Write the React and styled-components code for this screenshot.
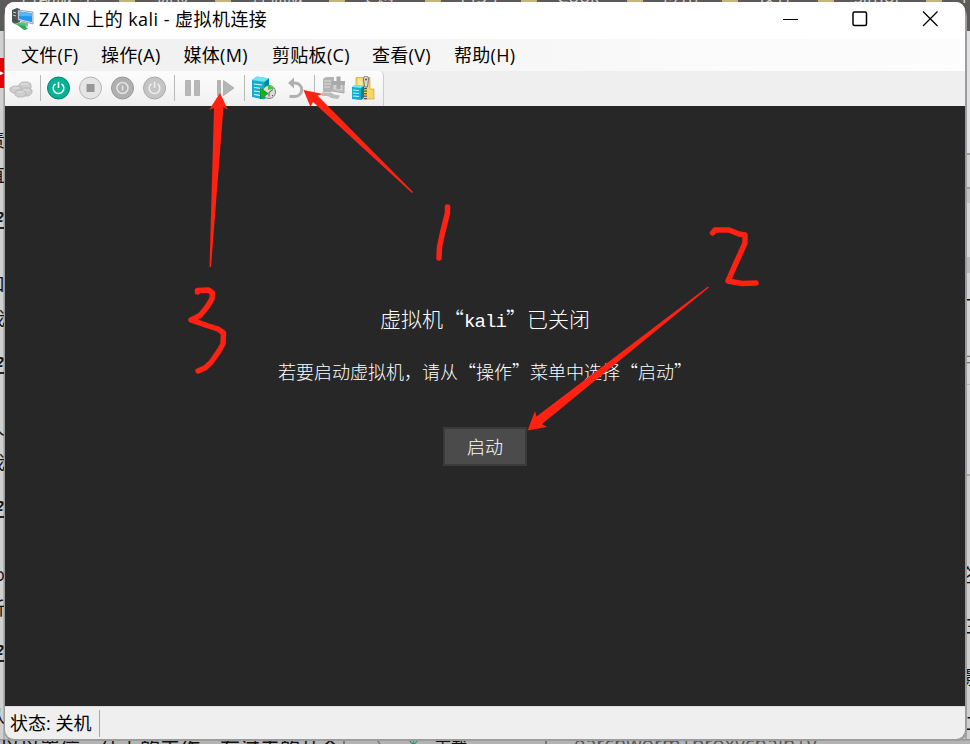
import React from 'react';
import styled, { createGlobalStyle, css } from 'styled-components';

const ui = '"Open Sans", "Noto Sans CJK SC", sans-serif';
const RED = '#ff2112';

const Global = createGlobalStyle`
  * { box-sizing: border-box; }
  body { margin: 0; overflow: hidden; }
`;

const Desktop = styled.div`
  position: relative;
  width: 970px;
  height: 744px;
  overflow: hidden;
  background: #c9c9c9;
  font-family: ${ui};
`;

/* ---------- pages behind the window ---------- */
const Backdrop = styled.div`
  display: grid;
  grid-template: 31px 1fr 5px / 5px 1fr 5px;
  width: 100%;
  height: 100%;
`;
const Bookmarks = styled.div`
  grid-column: 1 / -1;
  background: #5c5a5a;
  display: flex;
  overflow: hidden;
  color: #d2d2d2;
`;
const Folder = styled.i`
  flex: none;
  width: 16px;
  height: 3px;
  background: #c5b57c;
`;
const Bookmark = styled.span`
  flex: none;
  width: ${p => p.$w}px;
  padding-left: 20px;
  font-size: 18px;
  line-height: 16px;
  height: 16px;
  margin-top: -12px;
  white-space: nowrap;
  overflow: hidden;
`;
const Edge = styled.div`
  overflow: hidden;
  display: flex;
  flex-direction: column;
  background: linear-gradient(90deg, #d0d0d0 0 3px, #b2b2b2 3px);
`;
const RightEdge = styled(Edge)`
  grid-column: 3;
  background:
    linear-gradient(90deg, #a6a6a6 0 2px, transparent 2px),
    linear-gradient(#e2e2e4 0 122px, #a0a0a0 122px 124px, #d4d4d6 124px 156px, #a0a0a0 156px 158px,
      #c4c4c8 158px 172px, #d8d8da 172px 226px, #bcbcc0 226px 242px, #d6d6d8 242px 353px,
      #b8b8ba 353px 354px, #d6d6d8 354px 443px, #aaa 443px 445px, #cfcfd0 445px);
`;
const Scrap = styled.span`
  flex: none;
  height: 18px;
  width: 19px;
  margin: ${p => p.$gap}px 0 0 ${p => p.$shift || 0}px;
  font-size: 18px;
  line-height: 18px;
  color: ${p => p.$c || '#111'};
  ${p => p.$rule && css`
    border-bottom: 2px solid #222;
    font-style: italic;
    font-weight: 700;
    font-size: 14px;
    line-height: 12px;
  `}
`;
const RedTag = styled.b`
  flex: none;
  height: 30px;
  margin-top: 27px;
  background: #e60000;
  color: #fff;
  font-size: 7px;
  line-height: 30px;
`;
const Under = styled.div`
  grid-column: 1 / -1;
  grid-row: 3;
  overflow: hidden;
  display: flex;
  background: linear-gradient(#969696 0 1px, #b4b4b4 2px);
  white-space: nowrap;
`;
const UnderText = styled.span`
  flex: none;
  height: 20px;
  width: ${p => p.$w}px;
  padding-left: ${p => p.$pad || 0}px;
  color: ${p => p.$c || '#111'};
  font-size: ${p => p.$size || 20}px;
  line-height: ${p => p.$lh || 20}px;
  ${p => p.$line && css`border-right: 2px solid #777;`}
`;

/* ---------- window ---------- */
const Window = styled.main`
  position: absolute;
  left: 5px;
  top: 2px;
  width: 960px;
  height: 737px;
  border-radius: 9px;
  overflow: hidden;
  display: flex;
  flex-direction: column;
  background: #efefef;
  color: #000;
`;
const Shade = styled.div`
  position: absolute;
  left: 4px;
  top: 6px;
  width: 963px;
  height: 735px;
  border-radius: 10px;
  background: #9c9c9c;
`;
const TitleBar = styled.header`
  flex: none;
  height: 37px;
  display: flex;
  align-items: center;
  background: #fff;
  padding: 0 0 3px 6px;
`;
const Title = styled.h1`
  margin: 0 auto 0 4px;
  font-size: 18px;
  line-height: 30px;
  font-weight: 400;
  white-space: pre;
  letter-spacing: 0.45px;
`;
const Caption = styled.button`
  width: 70px;
  height: 36px;
  padding: 0;
  border: 0;
  background: none;
  display: grid;
  place-items: center;
`;
const MenuBar = styled.nav`
  flex: none;
  height: 32px;
  display: flex;
  align-items: center;
  background: linear-gradient(90deg, #f0f0f0, #f2f2f2 30%, #fbfbfb 75%, #fcfcfc);
  padding-left: 16px;
`;
const MenuItem = styled.span`
  width: ${p => p.$w}px;
  font-size: 18px;
  line-height: 30px;
  letter-spacing: 0.3px;
  white-space: nowrap;
`;
const ToolRow = styled.div`
  flex: none;
  height: 35px;
  display: flex;
`;
const Tools = styled.div`
  width: 379px;
  display: flex;
  align-items: center;
  background: linear-gradient(#fcfcfc, #f7f7f7 50%, #eeeeee);
  border-radius: 0 5px 0 0;
  border-right: 1px solid #ccc;
  padding-bottom: 1px;
`;
const Slot = styled.span`
  width: ${p => p.$w}px;
  height: 24px;
  display: grid;
  place-items: center;
`;
const Separator = styled.i`
  width: 1px;
  height: 26px;
  margin: 0 3px;
  background: #b9b9b9;
`;
const Screen = styled.section`
  flex: none;
  height: 600px;
  display: flex;
  flex-direction: column;
  align-items: center;
  background: #272727;
  color: #fff;
  font-family: "Noto Sans CJK SC", sans-serif;
  font-weight: 300;
`;
const Heading = styled.h2`
  margin: 196px 0 0;
  font-size: 21px;
  line-height: 32px;
  height: 32px;
  font-weight: 300;
  white-space: nowrap;
`;
const Mono = styled.span`
  font-family: "Liberation Mono", monospace;
  font-size: 19px;
  letter-spacing: -0.9px;
`;
const Hint = styled.p`
  margin: 22px 0 0;
  font-size: 18px;
  line-height: 30px;
  white-space: nowrap;
`;
const StartButton = styled.button`
  width: 84px;
  height: 39px;
  margin-top: 41px;
  padding: 0 0 2px;
  border: 2px solid #3a3a3a;
  background: #4b4b4b;
  color: #fff;
  font: 300 18px/30px "Noto Sans CJK SC", sans-serif;
`;
const StatusBar = styled.footer`
  height: 33px;
  display: flex;
  align-items: center;
  border-top: 1px solid #dcdcdc;
  padding-left: 5px;
`;
const Status = styled.span`
  width: 90px;
  height: 27px;
  border-right: 1px solid #a5a5a5;
  font-size: 18px;
  line-height: 27px;
  white-space: nowrap;
`;
const Marks = styled.svg`
  position: absolute;
  inset: 0;
  pointer-events: none;
`;

const Icon = ({ children, size = 24 }) => (
  <svg width={size} height={size} viewBox="0 0 24 24" fill="none">{children}</svg>
);

const Circle = ({ fill, edge, children }) => (
  <Icon><circle cx="11.5" cy="12" r="11" fill={fill} stroke={edge} />{children}</Icon>
);
const Power = ({ c }) => (
  <g stroke={c} strokeWidth="1.6"><path d="M8.500 7.800a5.300 5.300 0 1 0 6 0M11.500 5.800v6.200" /></g>
);

const AppIcon = () => (
  <Icon>
    <path d="M1 3l5-2 3 1v13l-5 2-3-2z" fill="#4c5357" />
    <path d="M2 5l3 1M2 8l3 1" stroke="#c6d0d3" />
    <path d="M7 3l15 2v12L7 13z" fill="#e1e7ea" stroke="#78848b" strokeWidth=".7" />
    <path d="M8 4.500l13 1.700v9L8 12z" fill="#2196f3" />
    <path d="M8 4.500l13 1.700v3L8 9z" fill="#55b4fa" />
    <path d="M12 15l5 1v4l-3-1z" fill="#a5adb0" />
    <path d="M3 17l8-2 4 2v3l-8-2z" fill="#48c77a" />
    <path d="M5 17l9 2 3 3-4 1z" fill="#31a45c" />
  </Icon>
);
const Keys = () => (
  <Icon>
    <g fill="#cdcdcd" stroke="#b2b2b2" strokeWidth=".8">
      <path d="M10 8.500l3-2.500h6l3 2v4l-3 2h-6l-3-2z" /><path d="M1 12l4-2h5l3 2v3l-3 2H4l-3-2z" />
      <path d="M12 14l2-2h6l3 2v3l-3 3h-5l-3-2z" /><path d="M6 16l3-2h5l3 2v3l-3 2H9l-3-2z" />
    </g>
    <path d="M12 8h7M4 12h6M14 14h6M9 16h5" stroke="#e3e3e3" />
  </Icon>
);
const Checkpoint = () => (
  <Icon>
    <path d="M0 4l5-3.500L17 2.500V19l-5 4.500L0 21z" fill="#12b0cc" />
    <path d="M0 4l5-3.500L17 2.500 12.500 6z" fill="#6ce6f3" /><path d="M12.500 6L17 2.500V19l-4.500 4z" fill="#078498" />
    <path d="M2 8l8 1M2 11.500l8 1M2 15l7 1M2 18.500l6 .8" stroke="#d6fbff" strokeWidth="1.200" />
    <circle cx="17" cy="16" r="6.500" fill="#dcdcdc" stroke="#7c7c7c" />
    <path d="M17 16.500l4-3M17 16.500v4M13 19l1-1M20 19l1 1" stroke="#555" />
    <path d="M16 8.500l6.500 4-6.500 1.500z" fill="#3ccb3c" /><path d="M8.500 12l7.500 5.500-7.500 5.500z" fill="#14b514" stroke="#087b12" strokeWidth=".6" />
  </Icon>
);
const Revert = () => (
  <Icon>
    <path d="M8 7h4a6.200 6.200 0 0 1 0 13.500H6.500" stroke="#b0b0b0" strokeWidth="3" />
    <path d="M5 7l6-5.500v11z" fill="#b0b0b0" />
  </Icon>
);
const Enhanced = () => (
  <Icon>
    <path d="M1 3l3-2h8v13l-3 2H1z" fill="#b4b4b4" /><path d="M2 5h7M2 8h7M2 11h6" stroke="#dcdcdc" />
    <path d="M10 7h12v10l-12-2z" fill="#c2c2c2" stroke="#a8a8a8" /><path d="M12 9h8v5l-8-1z" fill="#d4d4d4" />
    <path d="M14.500.5h4V5H23v4h-4.500v4h-4V9H10V5h4.500z" fill="#a9a9a9" />
    <path d="M0 16.500h9l3 2 6 1-2 3.500-7-1-3-2H0z" fill="#bbb" />
  </Icon>
);
const Archive = () => (
  <Icon>
    <path d="M4 1.500h14V13h4v10H4z" fill="#f7d565" stroke="#d2a431" strokeWidth=".7" />
    <path d="M6 3h4v19H6z" fill="#fde79b" />
    <path d="M13.500 7v17" stroke="#555" strokeWidth="3" strokeDasharray="1.300 1.200" />
    <path d="M11.500 3c0-4 5-4 5 0l-1 8h-3z" fill="#d7d7d7" stroke="#777" /><circle cx="14" cy="3.500" r="1" fill="#555" />
    <path d="M0 11l3-2 9 1v11l-3 3-9-1z" fill="#12afca" /><path d="M0 11l3-2 9 1-3 2z" fill="#78e8f4" />
    <path d="M9 12l3-2v11l-3 3z" fill="#087d93" /><path d="M1 14l6 .5M1 17l6 .5M1 20l6 .5" stroke="#b7f7ff" />
  </Icon>
);

const bookmarks = [['标签', 80], ['神仙版', 98], ['t 购', 80], ['( [3 )', 80], ['Cook', 90], ['应用', 79], ['仅存', 80], ['simor', 92], ['re', 30]];
const leftScraps = [[43, '责', -13], [17, '直', -13], [27, '2', -4, 1], [46, '口', -13], [16, '我', -13], [29, '2', -4, 1], [45, '人', -13], [16, '我', -13], [29, '2', -4, 1], [47, 'o', -6], [16, '听', -13], [27, '2', -4, 1], [45, '从', -13]];
const rightScraps = [[260, '一', 0], [43, '中', -8, '#777'], [196, '论', -9], [33, '三', 0], [33, '影', 0], [28, '二', 0]];
const menus = [['文件(F)', 80], ['操作(A)', 82.5], ['媒体(M)', 88.5], ['剪贴板(C)', 100], ['查看(V)', 82], ['帮助(H)', 80]];

export default function App() {
  return (
    <Desktop>
      <Global />
      <Backdrop>
        <Bookmarks>
          <Bookmark $w={119}>自动版 小</Bookmark>
          {bookmarks.map(([label, w], i) => (
            <React.Fragment key={i}><Folder /><Bookmark $w={w}>{label}</Bookmark></React.Fragment>
          ))}
        </Bookmarks>
        <Edge>
          <RedTag>▸</RedTag>
          {leftScraps.map(([gap, text, shift, rule], i) => <Scrap key={i} $gap={gap} $shift={shift} $rule={rule}>{text}</Scrap>)}
        </Edge>
        <RightEdge>
          {rightScraps.map(([gap, text, shift, c], i) => <Scrap key={i} $gap={gap} $shift={shift} $c={c}>{text}</Scrap>)}
        </RightEdge>
        <Under>
          <UnderText $w={345} $line>以以置信，什上的工作，在过去的几个</UnderText>
          <UnderText $w={60} $pad={30} $c="#777">〉</UnderText>
          <UnderText $w={30} $c="#159577" $lh={12}>✳</UnderText>
          <UnderText $w={112} $size={16} $lh={16} $line>下载</UnderText>
          <UnderText $w={300} $pad={27} $size={20} $lh={10} $c="#555">earchworm+proxychain+v</UnderText>
        </Under>
      </Backdrop>
      <Shade />
      <Window>
        <TitleBar>
          <AppIcon />
          <Title>ZAIN 上的 kali - 虚拟机连接</Title>
          <Caption><svg width="16" height="16"><path d="M1 8.500h15" stroke="#000" /></svg></Caption>
          <Caption><svg width="16" height="16"><rect x="1" y="1" width="13.500" height="13.500" rx="1.500" fill="none" stroke="#000" strokeWidth="1.500" /></svg></Caption>
          <Caption><svg width="16" height="16"><path d="M1 .5l14.500 14.500m0-14.500l-14.500 14.500" stroke="#000" strokeWidth="1.300" /></svg></Caption>
        </TitleBar>
        <MenuBar>{menus.map(([text, w]) => <MenuItem key={text} $w={w}>{text}</MenuItem>)}</MenuBar>
        <ToolRow>
          <Tools>
            <Slot $w={32}><Keys /></Slot>
            <Separator />
            <Slot $w={30}><Circle fill="#06b294" edge="#07806d"><Power c="#fff" /></Circle></Slot>
            <Slot $w={33}><Circle fill="#e5e5e5" edge="#b4b4b4"><path d="M7.500 8h8v8h-8z" fill="#979797" /></Circle></Slot>
            <Slot $w={32}><Circle fill="#b0b0b0" edge="#999"><circle cx="11.500" cy="12" r="5.500" stroke="#e4e4e4" strokeWidth="1.500" /><path d="M11.500 9.500v5" stroke="#e4e4e4" strokeWidth="1.600" /></Circle></Slot>
            <Slot $w={32}><Circle fill="#c5c5c5" edge="#aaa"><Power c="#eee" /></Circle></Slot>
            <Separator />
            <Slot $w={30}><Icon><path d="M4.500 4.500h5v15h-5zM13.500 4.500h5v15h-5z" fill="#b7b7b7" stroke="#aaa" strokeWidth=".8" /></Icon></Slot>
            <Slot $w={33}><Icon><path d="M4.500 4.500h3v15h-3zM10.500 4.500L21 12l-10.500 7.500z" fill="#b5b5b5" stroke="#a6a6a6" strokeWidth=".8" /></Icon></Slot>
            <Separator />
            <Slot $w={31}><Checkpoint /></Slot>
            <Slot $w={32}><Revert /></Slot>
            <Separator />
            <Slot $w={31}><Enhanced /></Slot>
            <Slot $w={30}><Archive /></Slot>
          </Tools>
        </ToolRow>
        <Screen>
          <Heading>虚拟机“<Mono>kali</Mono>”已关闭</Heading>
          <Hint>若要启动虚拟机，请从“操作”菜单中选择“启动”</Hint>
          <StartButton>启动</StartButton>
        </Screen>
        <StatusBar><Status>状态: 关机</Status></StatusBar>
      </Window>
      <Marks width="970" height="744" fill={RED}>
        <path d="M220 93L209 110l5-2-4.500 159h1.500l12.500-160 4.500 3z" />
        <path d="M303.500 90L323 94l-5.500 1.500L413 192l-1 1-99-91-2.500 5z" />
        <path d="M527.500 430.500L535 411l1.500 5.500L708 286.500l1 1L542 424l5 3z" />
        <g fill="none" stroke={RED} strokeWidth="5.500" strokeLinecap="round" strokeLinejoin="round">
          <path d="M447.500 207v6l-5 20-3 14-.5 11" />
          <path d="M197.500 292v-1.500l11-.5 4 3-.5 6-5 8-7 8.500-9 4.500 16 5.500 11 3.500 5.500 4-.5 11-4 7-8 11.500-6 5.500-7 3" />
          <path d="M712.500 233l2.500-3h14l10 4 6 1v8l-9 20-8 18 14 2.500 14-.5" />
        </g>
      </Marks>
    </Desktop>
  );
}
